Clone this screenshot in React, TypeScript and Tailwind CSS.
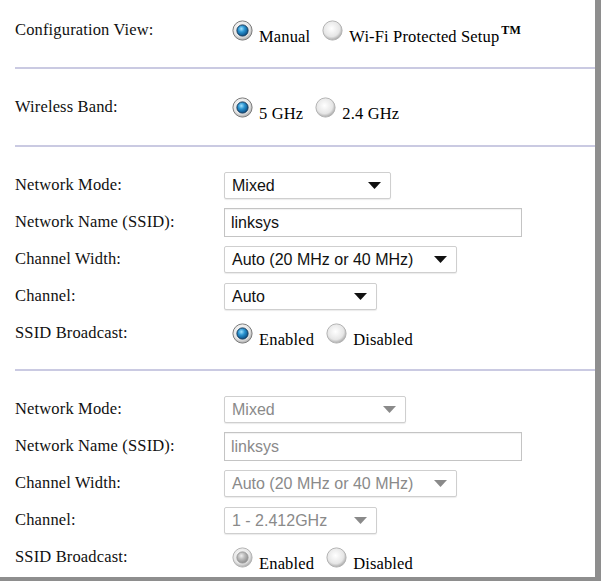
import { useId } from "react";

type RadioProps = { checked?: boolean; disabled?: boolean };

function Radio({ checked = false, disabled = false }: RadioProps) {
  const id = useId().replace(/:/g, "");
  return (
    <svg width="21" height="21" viewBox="0 0 21 21" className="shrink-0">
      <defs>
        <radialGradient id={`ring${id}`} cx="45%" cy="40%" r="60%">
          <stop offset="0%" stopColor="#ffffff" />
          <stop offset="70%" stopColor="#e6e6e6" />
          <stop offset="100%" stopColor="#a9a9a9" />
        </radialGradient>
        <radialGradient id={`dot${id}`} cx="40%" cy="35%" r="65%">
          <stop offset="0%" stopColor={disabled ? "#eeeeee" : "#9fe2ff"} />
          <stop offset="45%" stopColor={disabled ? "#bdbdbd" : "#2a93d0"} />
          <stop offset="100%" stopColor={disabled ? "#8f8f8f" : "#0b4f86"} />
        </radialGradient>
      </defs>
      <circle cx="10.5" cy="10.5" r="9.6" fill={`url(#ring${id})`} stroke={checked && !disabled ? "#7d7d7d" : "#b4b4b4"} strokeWidth="1" />
      {checked && (
        <circle cx="10.5" cy="10.5" r="5.6" fill={`url(#dot${id})`} stroke={disabled ? "#9a9a9a" : "#143a5c"} strokeWidth="1" />
      )}
    </svg>
  );
}

function RadioOpt({ label, checked, disabled, last }: { label: React.ReactNode; checked?: boolean; disabled?: boolean; last?: boolean }) {
  return (
    <div className={`flex items-end ${last ? "" : "mr-[12px]"}`}>
      <Radio checked={checked} disabled={disabled} />
      <span className="ml-[6px] leading-none translate-y-[4px] text-[16.5px] tracking-[0.15px] text-black whitespace-nowrap">{label}</span>
    </div>
  );
}

function Select({ value, width, disabled }: { value: string; width: string; disabled?: boolean }) {
  return (
    <div
      className={`${width} h-[27px] flex items-center justify-between pl-[7px] pr-[9px] bg-white border border-[#cfcfcf] rounded-[2px] shadow-[0_1px_1px_rgba(0,0,0,0.08)] font-['Liberation_Sans',Arial,sans-serif] text-[16px] ${disabled ? "text-[#8a8a8a]" : "text-[#111]"}`}
    >
      <span>{value}</span>
      <svg width="13" height="7" viewBox="0 0 13 7">
        <path d="M0 0 H13 L6.5 7 Z" fill={disabled ? "#8a8a8a" : "#111"} />
      </svg>
    </div>
  );
}

function TextBox({ value, disabled }: { value: string; disabled?: boolean }) {
  return (
    <div
      className={`w-[298px] h-[29px] flex items-center pl-[6px] bg-white border border-[#c4c4c4] shadow-[inset_0_1px_1px_rgba(0,0,0,0.06)] font-['Liberation_Sans',Arial,sans-serif] text-[16px] ${disabled ? "text-[#8a8a8a]" : "text-[#111]"}`}
    >
      {value}
    </div>
  );
}

function Row({ label, children }: { label: string; children: React.ReactNode }) {
  return (
    <div className="h-[37px] flex items-center">
      <div className="w-[209px] shrink-0 text-[16.5px] tracking-[0.15px] text-[#111]">{label}</div>
      <div className="flex items-center">{children}</div>
    </div>
  );
}

function Divider() {
  return <div className="h-[2px] bg-[#cacae2]" />;
}

function NetworkBlock({ disabled }: { disabled?: boolean }) {
  return (
    <div>
      <Row label="Network Mode:">
        <Select value="Mixed" width={disabled ? "w-[182px]" : "w-[167px]"} disabled={disabled} />
      </Row>
      <Row label="Network Name (SSID):">
        <TextBox value="linksys" disabled={disabled} />
      </Row>
      <Row label="Channel Width:">
        <Select value="Auto (20 MHz or 40 MHz)" width="w-[233px]" disabled={disabled} />
      </Row>
      <Row label="Channel:">
        <Select value={disabled ? "1 - 2.412GHz" : "Auto"} width="w-[153px]" disabled={disabled} />
      </Row>
      <Row label="SSID Broadcast:">
        <div className="flex items-end pl-[8px]">
          <RadioOpt label="Enabled" checked disabled={disabled} />
          <RadioOpt label="Disabled" disabled={disabled} last />
        </div>
      </Row>
    </div>
  );
}

export default function App() {
  return (
    <div className="w-[601px] h-[581px] bg-white border-r-[6px] border-b-[4px] border-[#8e8e8e] overflow-hidden font-['Liberation_Serif','Times_New_Roman',serif]">
      <div className="pl-[15px]">
        <div className="pt-[12px] pb-[18px]">
          <Row label="Configuration View:">
            <div className="flex items-end pl-[8px]">
              <RadioOpt label="Manual" checked />
              <RadioOpt
                last
                label={
                  <>
                    Wi-Fi Protected Setup
                    <span className="ml-[2px] text-[12px] font-bold relative -top-[8px]">TM</span>
                  </>
                }
              />
            </div>
          </Row>
        </div>
        <Divider />
        <div className="pt-[20px] pb-[19px]">
          <Row label="Wireless Band:">
            <div className="flex items-end pl-[8px]">
              <RadioOpt label="5 GHz" checked />
              <RadioOpt label="2.4 GHz" last />
            </div>
          </Row>
        </div>
        <Divider />
        <div className="pt-[20px] pb-[17px]">
          <NetworkBlock />
        </div>
        <Divider />
        <div className="pt-[20px]">
          <NetworkBlock disabled />
        </div>
      </div>
    </div>
  );
}
